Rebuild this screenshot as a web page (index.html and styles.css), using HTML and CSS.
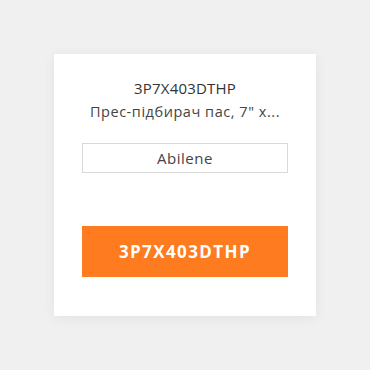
FILE: index.html
```html
<!DOCTYPE html>
<html lang="uk">
<head>
<meta charset="utf-8">
<link rel="stylesheet" href="styles.css">
</head>
<body>
<div class="card">
  <div class="sku">3P7X403DTHP</div>
  <div class="desc">Прес-підбирач пас, 7" x...</div>
  <div class="field">Abilene</div>
  <div class="btn">3P7X403DTHP</div>
</div>
</body>
</html>
```
FILE: styles.css
```css
html, body {
  margin: 0;
  padding: 0;
  background: #f0f0f0;
  font-family: "Open Sans", "DejaVu Sans", sans-serif;
}
body {
  width: 370px;
  height: 370px;
  display: flex;
  align-items: center;
  justify-content: center;
}
.card {
  width: 262px;
  height: 262px;
  box-sizing: border-box;
  background: #fff;
  padding: 24px 28px 0;
  display: flex;
  flex-direction: column;
  align-items: stretch;
  box-shadow: 0 2px 12px rgba(0,0,0,0.06);
}
.sku {
  text-align: center;
  font-size: 15px;
  line-height: 20px;
  letter-spacing: 0.2px;
  color: #333;
}
.desc {
  text-align: center;
  font-size: 14.5px;
  line-height: 24px;
  letter-spacing: 0.55px;
  margin-top: 2px;
  color: #444;
}
.field {
  margin-top: 19px;
  height: 30px;
  box-sizing: border-box;
  border: 1px solid #d9d9d9;
  text-align: center;
  font-size: 15px;
  line-height: 28px;
  letter-spacing: 0.5px;
  color: #444;
}
.btn {
  margin-top: 53px;
  height: 51px;
  background: #ff7b20;
  color: #fff;
  font-weight: 700;
  font-size: 17px;
  letter-spacing: 1.4px;
  display: flex;
  align-items: center;
  justify-content: center;
}
```
